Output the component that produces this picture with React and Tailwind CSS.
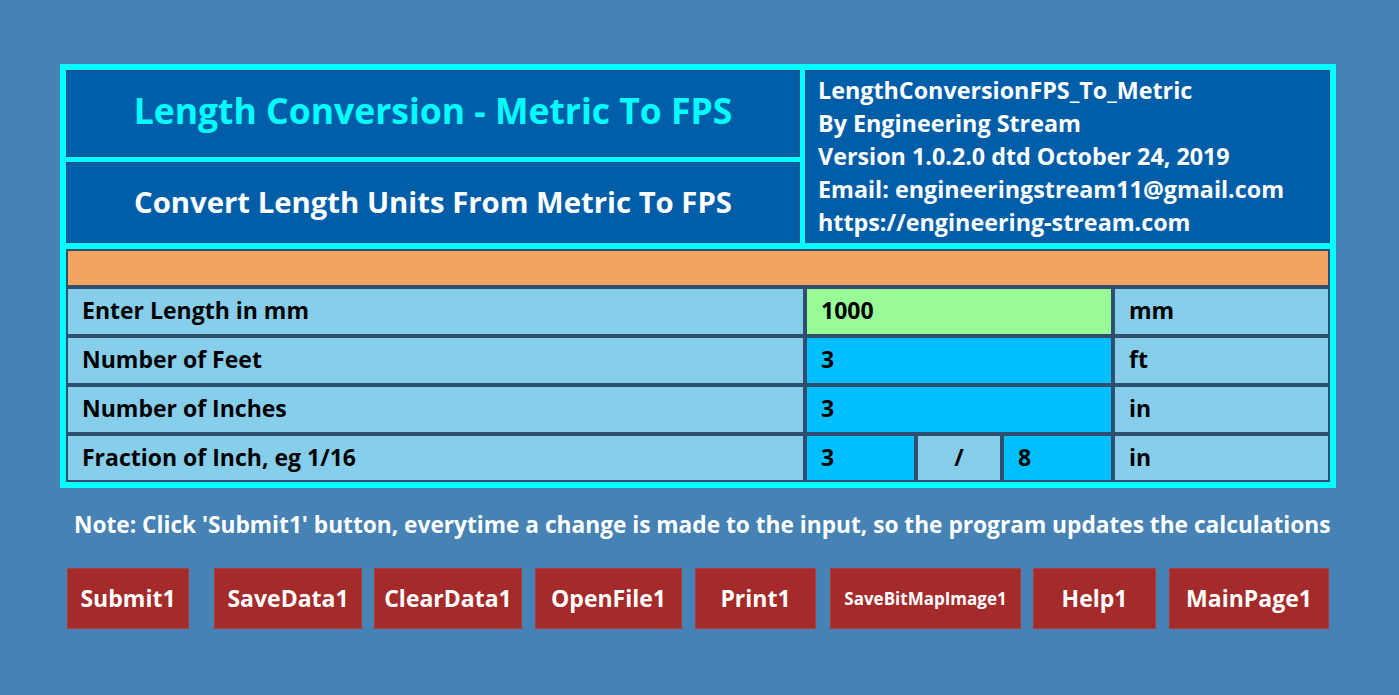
import React from "react";

const font = { fontFamily: '"Open Sans", "Noto Sans", sans-serif' };

const rows = [
  { label: "Enter Length in mm", value: "1000", unit: "mm", green: true },
  { label: "Number of Feet", value: "3", unit: "ft" },
  { label: "Number of Inches", value: "3", unit: "in" },
];

const buttons = [
  { text: "Submit1", w: "w-[122px]", ml: "ml-0" },
  { text: "SaveData1", w: "w-[148px]", ml: "ml-[25px]" },
  { text: "ClearData1", w: "w-[148px]", ml: "ml-[12px]" },
  { text: "OpenFile1", w: "w-[147px]", ml: "ml-[13px]" },
  { text: "Print1", w: "w-[121px]", ml: "ml-[13px]" },
  { text: "SaveBitMapImage1", w: "w-[191px]", ml: "ml-[14px]", small: true },
  { text: "Help1", w: "w-[123px]", ml: "ml-[12px]" },
  { text: "MainPage1", w: "w-[160px]", ml: "ml-[13px]" },
];

const cell = "border-2 border-[#2f4f6f] flex items-center h-full";

export default function App() {
  return (
    <div className="w-[1399px] h-[695px] bg-[#4682b4] pt-[64px] pl-[60px] font-bold" style={font}>
      <div className="w-[1276px] bg-[#00ffff] p-[6px]">
        <div className="flex gap-[5px] h-[173px]">
          <div className="w-[734px] flex flex-col gap-[5px]">
            <div className="h-[87px] bg-[#005ea8] border border-[#1d4f80] flex items-center justify-center pb-[6px] text-[#00ffff] text-[35.5px] whitespace-nowrap">
              Length Conversion - Metric To FPS
            </div>
            <div className="flex-1 bg-[#005ea8] border border-[#1d4f80] flex items-center justify-center text-white text-[29.3px] whitespace-nowrap">
              Convert Length Units From Metric To FPS
            </div>
          </div>
          <div className="flex-1 bg-[#005ea8] border border-[#1d4f80] flex flex-col justify-center pl-[12px] text-white text-[23.3px] leading-[33px] whitespace-nowrap">
            <div>LengthConversionFPS_To_Metric</div>
            <div>By Engineering Stream</div>
            <div>Version 1.0.2.0 dtd October 24, 2019</div>
            <div>Email: engineeringstream11@gmail.com</div>
            <div>https://engineering-stream.com</div>
          </div>
        </div>

        <div className="mt-[6px] text-black text-[23px]">
          <div className="h-[38px] bg-[#f4a460] border-2 border-[#2f4f6f]"></div>
          {rows.map((r) => (
            <div key={r.label} className="flex h-[49px]">
              <div className={`${cell} w-[739px] bg-[#87ceeb] pl-[14px] pb-[2px]`}>{r.label}</div>
              <div className={`${cell} w-[308px] pl-[14px] pb-[2px] ${r.green ? "bg-[#98fb98]" : "bg-[#00bfff]"}`}>{r.value}</div>
              <div className={`${cell} flex-1 bg-[#87ceeb] pl-[14px] pb-[2px]`}>{r.unit}</div>
            </div>
          ))}
          <div className="flex h-[48px]">
            <div className={`${cell} w-[739px] bg-[#87ceeb] pl-[14px] pb-[2px]`}>Fraction of Inch, eg 1/16</div>
            <div className={`${cell} w-[111px] bg-[#00bfff] pl-[14px] pb-[2px]`}>3</div>
            <div className={`${cell} w-[86px] bg-[#87ceeb] justify-center pb-[2px]`}>/</div>
            <div className={`${cell} w-[111px] bg-[#00bfff] pl-[14px] pb-[2px]`}>8</div>
            <div className={`${cell} flex-1 bg-[#87ceeb] pl-[14px] pb-[2px]`}>in</div>
          </div>
        </div>
      </div>

      <div className="mt-[22px] pl-[14px] text-white text-[22.7px] leading-[30px] whitespace-nowrap">
        Note: Click 'Submit1' button, everytime a change is made to the input, so the program updates the calculations
      </div>

      <div className="flex mt-[28px] pl-[7px]">
        {buttons.map((b) => (
          <div
            key={b.text}
            className={`${b.w} ${b.ml} h-[61px] bg-[#a52a2a] border border-[#b23a3a] flex items-center justify-center text-white whitespace-nowrap ${b.small ? "text-[17px]" : "text-[23px]"}`}
          >
            {b.text}
          </div>
        ))}
      </div>
    </div>
  );
}
